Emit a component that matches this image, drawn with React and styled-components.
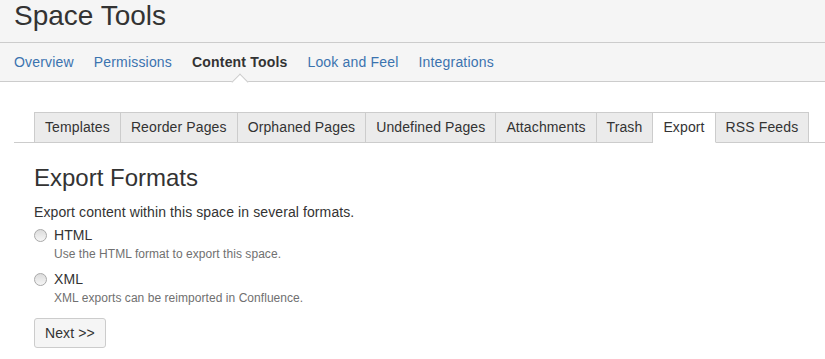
import React from "react"
import styled, { createGlobalStyle } from "styled-components"

const GlobalStyle = createGlobalStyle`
    body {
        margin: 0;
        background: #ffffff;
        font-family: "Liberation Sans", Arial, sans-serif;
        color: #333333;
    }
`

const NAV_ITEMS = ["Overview", "Permissions", "Content Tools", "Look and Feel", "Integrations"]
const TAB_ITEMS = ["Templates", "Reorder Pages", "Orphaned Pages", "Undefined Pages", "Attachments", "Trash", "Export", "RSS Feeds"]
const FORMATS = [
    { id: "html", name: "HTML", description: "Use the HTML format to export this space." },
    { id: "xml", name: "XML", description: "XML exports can be reimported in Confluence." },
]

const Header = styled.header`
    background: #f5f5f5;
    border-bottom: 1px solid #cccccc;
`

const TitleBar = styled.div`
    padding: 0 14px 10px;
    border-bottom: 1px solid #cccccc;
`

const Title = styled.h1`
    margin: 0;
    font-size: 28px;
    line-height: 32px;
    font-weight: normal;
    color: #333333;
`

const NavBar = styled.nav`
    display: flex;
    gap: 20px;
    padding: 9px 14px;
`

const NavItem = styled.a`
    position: relative;
    font-size: 14px;
    line-height: 20px;
    letter-spacing: 0.18px;
    text-decoration: none;
    cursor: pointer;
    color: ${props => props.active ? "#333333" : "#3b73af"};
    font-weight: ${props => props.active ? "bold" : "normal"};

    ${props => props.active && `
        &::after {
            content: "";
            position: absolute;
            left: 50%;
            bottom: -16px;
            width: 12px;
            height: 12px;
            margin-left: -6px;
            background: #ffffff;
            border-top: 1px solid #cccccc;
            border-left: 1px solid #cccccc;
            transform: rotate(45deg);
            box-sizing: border-box;
        }
    `}
`

const Content = styled.main`
    margin-left: 14px;
    padding-top: 30px;
`

const TabList = styled.ul`
    display: flex;
    margin: 0;
    padding: 0 0 0 20px;
    list-style: none;
    border-bottom: 1px solid #cccccc;
`

const Tab = styled.li`
    margin-bottom: -1px;
    padding: 4px 10px;
    font-size: 14px;
    line-height: 21px;
    letter-spacing: 0.12px;
    color: #333333;
    cursor: pointer;
    border: 1px solid #cccccc;
    border-bottom-color: ${props => props.active ? "#ffffff" : "#cccccc"};
    background: ${props => props.active ? "#ffffff" : "#ebebeb"};

    & + & {
        border-left: none;
    }
`

const Panel = styled.section`
    padding: 20px 0 0 20px;
`

const Heading = styled.h2`
    margin: 0 0 9px;
    font-size: 24px;
    line-height: 30px;
    font-weight: normal;
    color: #333333;
`

const Intro = styled.p`
    margin: 0 0 3px;
    font-size: 14px;
    line-height: 20px;
    letter-spacing: 0.1px;
`

const Option = styled.div`
    padding-bottom: 7px;
`

const OptionLabel = styled.label`
    display: flex;
    align-items: center;
    font-size: 14px;
    line-height: 20px;
    letter-spacing: 0.1px;
    cursor: pointer;
`

const Radio = styled.input`
    appearance: none;
    width: 13px;
    height: 13px;
    margin: 0 7px 0 0;
    border: 1px solid #a9a9a9;
    border-radius: 50%;
    background: linear-gradient(#dcdcdc, #f6f6f6);
    box-sizing: border-box;
`

const OptionDescription = styled.div`
    margin: 1px 0 0 20px;
    font-size: 12px;
    line-height: 16px;
    letter-spacing: 0.05px;
    color: #707070;
`

const Button = styled.button`
    margin-top: 5px;
    padding: 4px 10px;
    font-family: inherit;
    font-size: 14px;
    line-height: 20px;
    letter-spacing: 0.1px;
    color: #333333;
    background: #f5f5f5;
    border: 1px solid #cccccc;
    border-radius: 3px;
    cursor: pointer;
`

class App extends React.Component {
    render() {
        return (
            <>
                <GlobalStyle />
                <Header>
                    <TitleBar>
                        <Title>Space Tools</Title>
                    </TitleBar>
                    <NavBar>
                        {NAV_ITEMS.map(item => (
                            <NavItem key={item} active={item === "Content Tools"}>{item}</NavItem>
                        ))}
                    </NavBar>
                </Header>
                <Content>
                    <TabList>
                        {TAB_ITEMS.map(item => (
                            <Tab key={item} active={item === "Export"}>{item}</Tab>
                        ))}
                    </TabList>
                    <Panel>
                        <Heading>Export Formats</Heading>
                        <Intro>Export content within this space in several formats.</Intro>
                        {this.renderFormats()}
                        <Button>Next &gt;&gt;</Button>
                    </Panel>
                </Content>
            </>
        )
    }

    renderFormats = () => {
        return FORMATS.map(format => (
            <Option key={format.id}>
                <OptionLabel>
                    <Radio type="radio" name="format" value={format.id} />
                    {format.name}
                </OptionLabel>
                <OptionDescription>{format.description}</OptionDescription>
            </Option>
        ))
    }
}

export default App
